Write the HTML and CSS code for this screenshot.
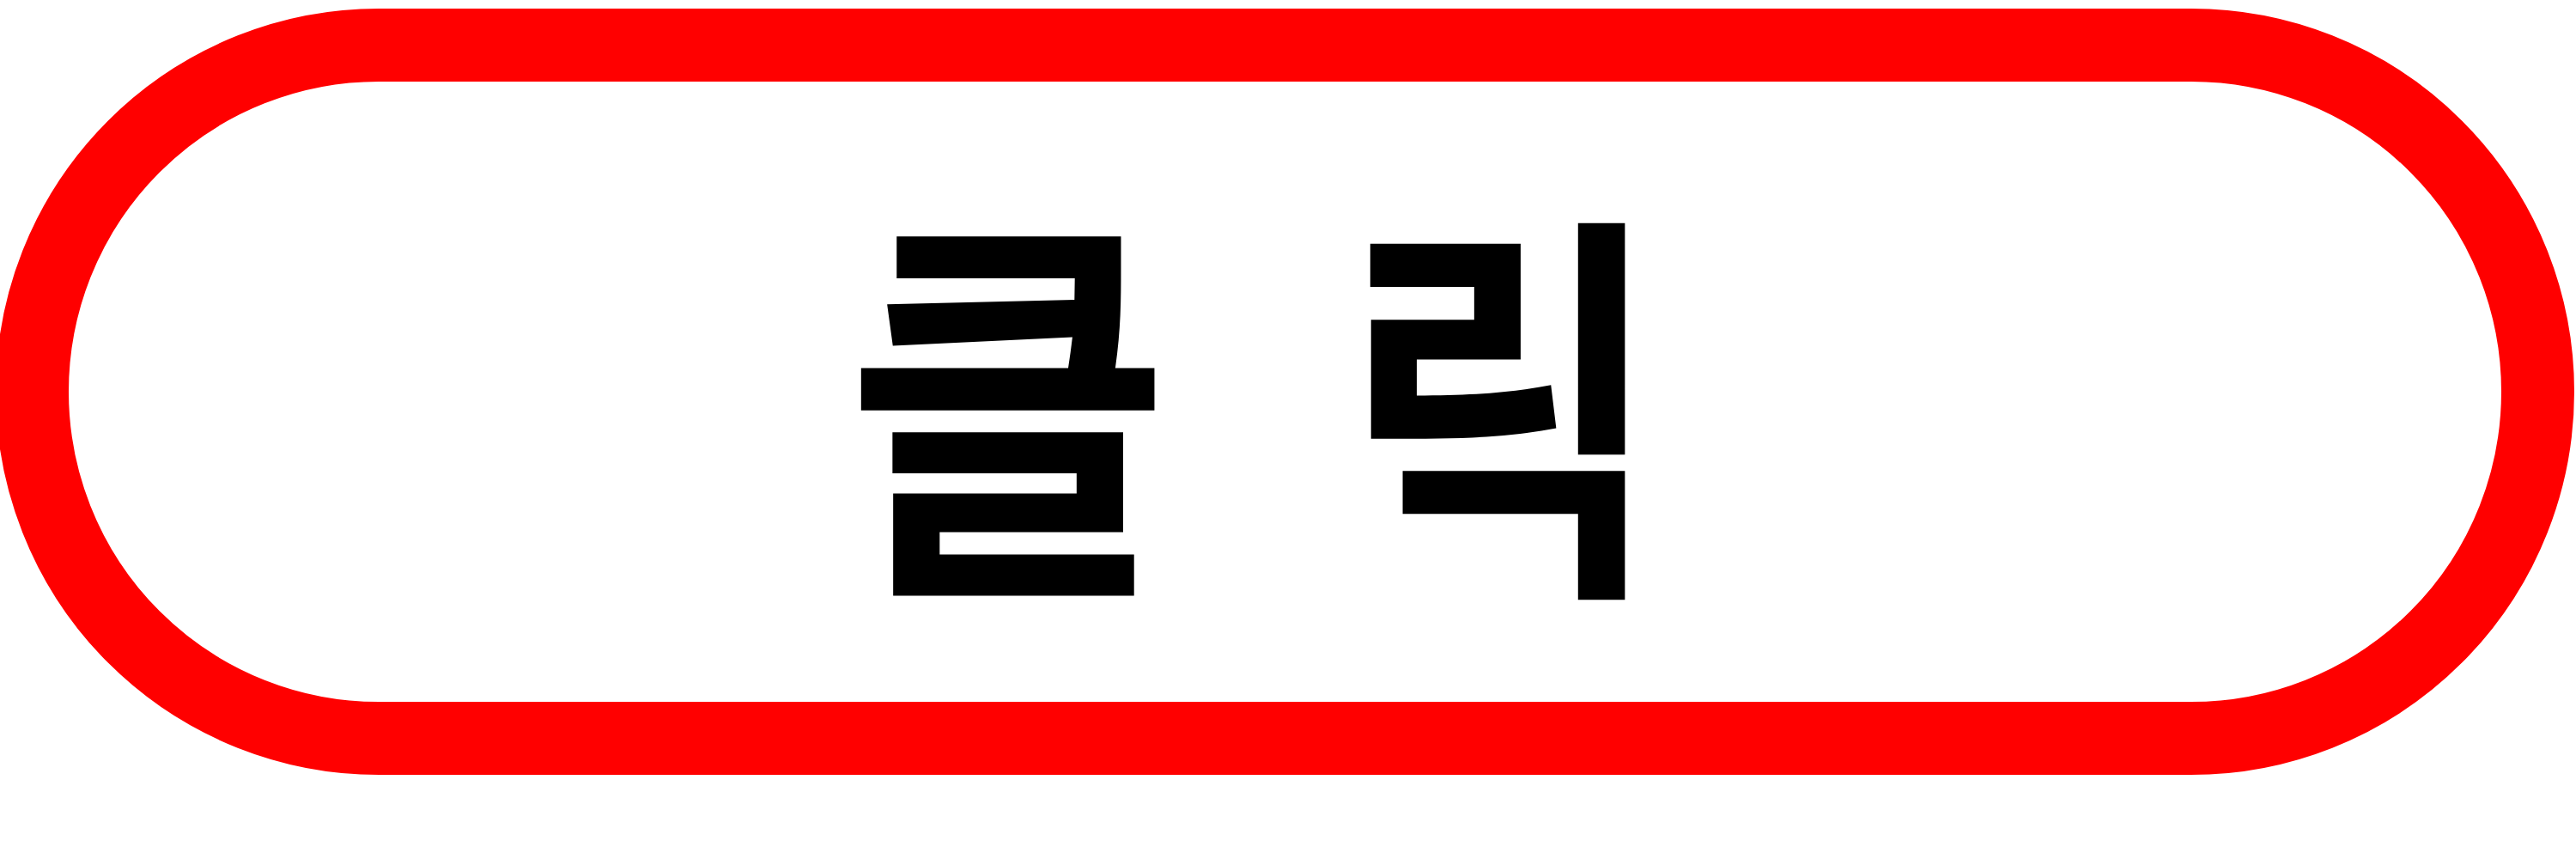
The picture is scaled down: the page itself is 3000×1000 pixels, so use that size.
FILE: index.html
```html
<!DOCTYPE html>
<html lang="ko">
<head>
<meta charset="utf-8">
<title>클릭</title>
<link rel="stylesheet" href="styles.css">
</head>
<body>
<div class="btn"><span class="label">클릭</span></div>
</body>
</html>
```
FILE: styles.css
```css
html, body {
  margin: 0;
  padding: 0;
  background: #ffffff;
}
body {
  width: 3000px;
  height: 1000px;
  overflow: hidden;
}
.btn {
  box-sizing: border-box;
  width: 3003px;
  height: 892px;
  margin: 10px 0 0 -5px;
  padding: 0 0 14px 127px;
  border: 85px solid #ff0000;
  border-radius: 446px;
  background: #ffffff;
  display: flex;
  align-items: center;
  justify-content: center;
}
.label {
  display: inline-block;
  font-family: "Noto Sans CJK KR", "Noto Sans", sans-serif;
  font-weight: 700;
  font-size: 473px;
  line-height: 473px;
  letter-spacing: 228px;
  white-space: nowrap;
  color: #000000;
  transform: scaleX(0.867);
  transform-origin: 50% 50%;
}
```
